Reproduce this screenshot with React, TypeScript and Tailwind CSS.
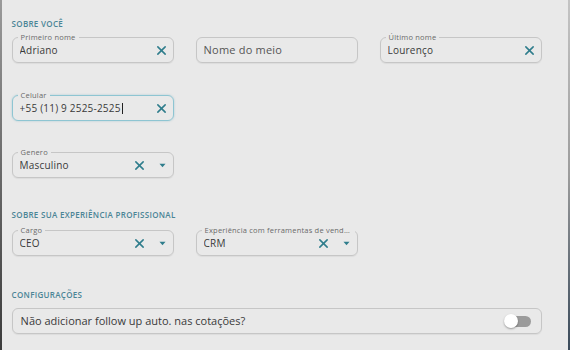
import React from 'react';

const font = { fontFamily: '"Open Sans", "DejaVu Sans", sans-serif' };

const ClearIcon = () => (
  <svg width="11" height="11" viewBox="0 0 12 12" className="shrink-0">
    <path d="M2 2 L10 10 M10 2 L2 10" stroke="#2f7d8c" strokeWidth="1.7" strokeLinecap="round" />
  </svg>
);

const Caret = () => (
  <svg width="7" height="5" viewBox="0 0 7 5" className="shrink-0">
    <path d="M0.5 0.8 L6.5 0.8 L3.5 4.2 Z" fill="#2f7d8c" />
  </svg>
);

interface FieldProps {
  label?: string;
  value?: string;
  placeholder?: string;
  select?: boolean;
  focused?: boolean;
  clearable?: boolean;
}

const Field: React.FC<FieldProps> = ({ label, value, placeholder, select, focused, clearable = true }) => (
  <div
    className={`relative h-[26px] rounded-[6px] border flex items-center pl-[7px] ${select ? 'pr-[7px]' : 'pr-[6px]'} ${
      focused ? 'border-[#8ec5d2] shadow-[0_0_2px_rgba(80,160,185,0.45)]' : 'border-[#c6c6c6] shadow-[0_1px_1px_rgba(0,0,0,0.06)]'
    }`}
  >
    {label && (
      <span className="absolute -top-[6px] left-[5px] px-[3px] bg-[#e9e9e9] text-[7.5px] leading-[10px] tracking-[0.2px] text-[#6a6a6a] max-w-[153px] truncate">
        {label}
      </span>
    )}
    <span className={`flex-1 tracking-[0.2px] ${placeholder ? 'text-[#555] text-[11px]' : 'text-[#3a3a3a] text-[10px]'} truncate`}>
      {value ?? placeholder}
      {focused && <span className="inline-block w-[1px] h-[11px] bg-[#222] align-middle ml-[1px]" />}
    </span>
    {value && clearable && <ClearIcon />}
    {select && (
      <span className="ml-[14px] flex items-center">
        <Caret />
      </span>
    )}
  </div>
);

const SectionTitle: React.FC<{ children: React.ReactNode; className?: string }> = ({ children, className }) => (
  <div className={`uppercase text-[8px] leading-[10px] font-semibold tracking-[0.3px] text-[#4b8596] ${className ?? ''}`}>{children}</div>
);

export default function App() {
  return (
    <div className="w-[570px] h-[350px] bg-[#e9e9e9] flex overflow-hidden" style={font}>
      <div className="w-[2px] h-full bg-gradient-to-b from-[#9a9a9a] to-[#3c3c3c]" />
      <div className="flex-1 pl-[10px] pr-[26px]">
        <SectionTitle className="mt-[19px]">SOBRE VOCÊ</SectionTitle>
        <div className="grid grid-cols-[162px_162px_162px] gap-x-[22px] mt-[8px]">
          <Field label="Primeiro nome" value="Adriano" />
          <Field placeholder="Nome do meio" />
          <Field label="Último nome" value="Lourenço" />
        </div>
        <div className="grid grid-cols-[162px] mt-[32px]">
          <Field label="Celular" value="+55 (11) 9 2525-2525" focused />
        </div>
        <div className="grid grid-cols-[162px] mt-[31px]">
          <Field label="Genero" value="Masculino" select />
        </div>

        <SectionTitle className="mt-[32px]">SOBRE SUA EXPERIÊNCIA PROFISSIONAL</SectionTitle>
        <div className="grid grid-cols-[162px_162px] gap-x-[22px] mt-[10px]">
          <Field label="Cargo" value="CEO" select />
          <Field label="Experiência com ferramentas de vendas" value="CRM" select />
        </div>

        <SectionTitle className="mt-[34px]">CONFIGURAÇÕES</SectionTitle>
        <div className="mt-[8px] w-[530px] h-[26px] rounded-[6px] border border-[#c6c6c6] shadow-[0_1px_1px_rgba(0,0,0,0.06)] flex items-center pl-[8px] pr-[9px]">
          <span className="flex-1 text-[11px] text-[#3a3a3a]">Não adicionar follow up auto. nas cotações?</span>
          <div className="relative w-[28px] h-[14px] flex items-center">
            <div className="ml-[7px] w-[20px] h-[11px] rounded-full bg-[#9b9b9b]" />
            <div className="absolute left-0 top-0 w-[14px] h-[14px] rounded-full bg-white shadow-[0_1px_2px_rgba(0,0,0,0.35)]" />
          </div>
        </div>
      </div>
      <div className="w-[3px] h-full bg-gradient-to-b from-[#c4c4c4] via-[#9c9c9c] to-[#3a4a5a]" />
    </div>
  );
}
